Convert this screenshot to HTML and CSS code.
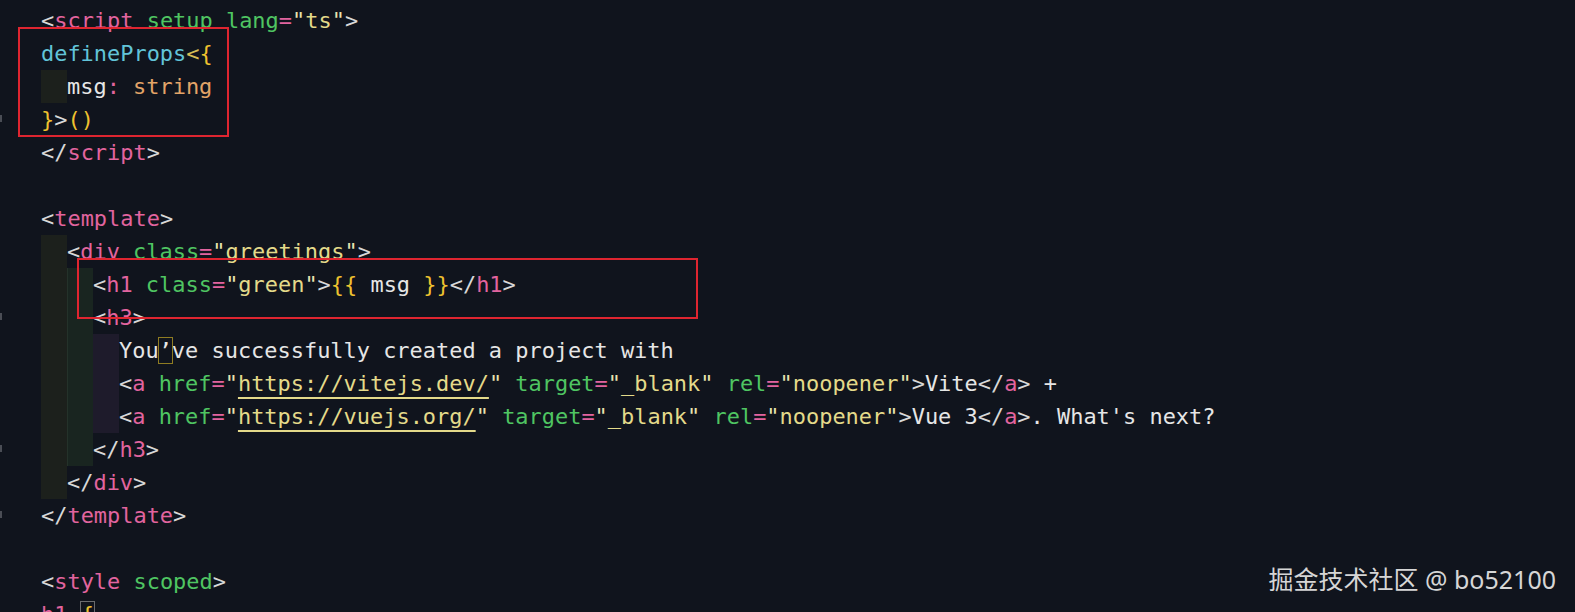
FILE: index.html
```html
<!DOCTYPE html>
<html lang="en">
<head>
<meta charset="utf-8">
<title>HelloWorld.vue</title>
<link rel="stylesheet" href="styles.css">
</head>
<body>
<div class="editor">
  <div class="ln"><span class="gut"></span><span class="code"><span class="p">&lt;</span><span class="t">script</span> <span class="a">setup</span> <span class="a">lang</span><span class="eq">=</span><span class="q">"</span><span class="s">ts</span><span class="q">"</span><span class="p">&gt;</span></span></div>
  <div class="ln"><span class="gut"></span><span class="code"><span class="f">defineProps</span><span class="lt">&lt;</span><span class="b">{</span></span></div>
  <div class="ln"><span class="gut"></span><span class="ind i1"></span><span class="code"><span class="w">msg</span><span class="eq">:</span> <span class="ty">string</span></span></div>
  <div class="ln"><span class="gut mk"></span><span class="code"><span class="b">}</span><span class="p">&gt;</span><span class="b">()</span></span></div>
  <div class="ln"><span class="gut"></span><span class="code"><span class="p">&lt;/</span><span class="t">script</span><span class="p">&gt;</span></span></div>
  <div class="ln"><span class="gut"></span><span class="code"> </span></div>
  <div class="ln"><span class="gut"></span><span class="code"><span class="p">&lt;</span><span class="t">template</span><span class="p">&gt;</span></span></div>
  <div class="ln"><span class="gut"></span><span class="ind i1"></span><span class="code"><span class="p">&lt;</span><span class="t">div</span> <span class="a">class</span><span class="eq">=</span><span class="q">"</span><span class="s">greetings</span><span class="q">"</span><span class="p">&gt;</span></span></div>
  <div class="ln"><span class="gut"></span><span class="ind i1"></span><span class="ind i2"></span><span class="code"><span class="p">&lt;</span><span class="t">h1</span> <span class="a">class</span><span class="eq">=</span><span class="q">"</span><span class="s">green</span><span class="q">"</span><span class="p">&gt;</span><span class="b">{{</span><span class="w"> msg </span><span class="b">}}</span><span class="p">&lt;/</span><span class="t">h1</span><span class="p">&gt;</span></span></div>
  <div class="ln"><span class="gut mk"></span><span class="ind i1"></span><span class="ind i2"></span><span class="code"><span class="p">&lt;</span><span class="t">h3</span><span class="p">&gt;</span></span></div>
  <div class="ln"><span class="gut"></span><span class="ind i1"></span><span class="ind i2"></span><span class="ind i3"></span><span class="code"><span class="w">You</span><span class="w hl">’</span><span class="w">ve successfully created a project with</span></span></div>
  <div class="ln"><span class="gut"></span><span class="ind i1"></span><span class="ind i2"></span><span class="ind i3"></span><span class="code"><span class="p">&lt;</span><span class="t">a</span> <span class="a">href</span><span class="eq">=</span><span class="q">"</span><span class="s u">https://vitejs.dev/</span><span class="q">"</span> <span class="a">target</span><span class="eq">=</span><span class="q">"</span><span class="s">_blank</span><span class="q">"</span> <span class="a">rel</span><span class="eq">=</span><span class="q">"</span><span class="s">noopener</span><span class="q">"</span><span class="p">&gt;</span><span class="w">Vite</span><span class="p">&lt;/</span><span class="t">a</span><span class="p">&gt;</span><span class="w"> +</span></span></div>
  <div class="ln"><span class="gut"></span><span class="ind i1"></span><span class="ind i2"></span><span class="ind i3"></span><span class="code"><span class="p">&lt;</span><span class="t">a</span> <span class="a">href</span><span class="eq">=</span><span class="q">"</span><span class="s u">https://vuejs.org/</span><span class="q">"</span> <span class="a">target</span><span class="eq">=</span><span class="q">"</span><span class="s">_blank</span><span class="q">"</span> <span class="a">rel</span><span class="eq">=</span><span class="q">"</span><span class="s">noopener</span><span class="q">"</span><span class="p">&gt;</span><span class="w">Vue 3</span><span class="p">&lt;/</span><span class="t">a</span><span class="p">&gt;</span><span class="w">. What's next?</span></span></div>
  <div class="ln"><span class="gut mk"></span><span class="ind i1"></span><span class="ind i2"></span><span class="code"><span class="p">&lt;/</span><span class="t">h3</span><span class="p">&gt;</span></span></div>
  <div class="ln"><span class="gut"></span><span class="ind i1"></span><span class="code"><span class="p">&lt;/</span><span class="t">div</span><span class="p">&gt;</span></span></div>
  <div class="ln"><span class="gut mk"></span><span class="code"><span class="p">&lt;/</span><span class="t">template</span><span class="p">&gt;</span></span></div>
  <div class="ln"><span class="gut"></span><span class="code"> </span></div>
  <div class="ln"><span class="gut"></span><span class="code"><span class="p">&lt;</span><span class="t">style</span> <span class="a">scoped</span><span class="p">&gt;</span></span></div>
  <div class="ln"><span class="gut"></span><span class="code"><span class="t">h1</span> <span class="b brk">{</span></span></div>
</div>
<div class="mark mark-props"></div>
<div class="mark mark-h1"></div>
<div class="watermark">掘金技术社区 @ bo52100</div>
</body>
</html>
```
FILE: styles.css
```css
html, body {
  margin: 0;
  padding: 0;
  width: 1575px;
  height: 612px;
  overflow: hidden;
  background: #10141d;
}

body {
  position: relative;
}

.editor {
  padding-top: 3.5px;
  font-family: "DejaVu Sans Mono", "Liberation Mono", monospace;
  font-size: 21.95px;
  color: #e2e2e2;
}

.ln {
  display: flex;
  align-items: stretch;
  height: 33px;
  line-height: 33px;
}

.gut {
  width: 41px;
  flex: none;
  position: relative;
}

.gut.mk::before {
  content: "";
  position: absolute;
  left: 0;
  top: 12px;
  width: 2px;
  height: 7px;
  background: #4a4d55;
}

.ind {
  width: 26px;
  flex: none;
}

.i1 { background: #1c201c; }
.i2 { background: #192520; box-shadow: inset 1px 0 0 #24322a; }
.i3 { background: #1e1b2b; }

.code {
  white-space: pre;
}

.p  { color: #d8d8d8; }
.t  { color: #e2649f; }
.a  { color: #4fc562; }
.eq { color: #e2649f; }
.q  { color: #e8e3b0; }
.s  { color: #e4da8a; }
.f  { color: #62c4d8; }
.lt { color: #d6bd55; }
.b  { color: #eec12f; }
.w  { color: #e6e6e6; }
.ty { color: #e3a468; }

.u {
  text-decoration: underline;
  text-decoration-color: #e4da8a;
  text-underline-offset: 6px;
  text-decoration-thickness: 1.5px;
}

.hl {
  outline: 1.5px solid #8f7c22;
  outline-offset: 0;
}

.brk {
  outline: 1.5px solid #6a6b6e;
}

.mark {
  position: absolute;
  border: 2px solid #df2530;
  box-sizing: border-box;
}

.mark-props {
  left: 18px;
  top: 27px;
  width: 211px;
  height: 110px;
}

.mark-h1 {
  left: 77px;
  top: 258px;
  width: 621px;
  height: 61px;
}

.watermark {
  position: absolute;
  right: 19px;
  top: 565px;
  font-family: "Noto Sans", "Noto Sans CJK SC", sans-serif;
  font-size: 25px;
  line-height: 28px;
  color: #d6d6d6;
  white-space: nowrap;
}
```
